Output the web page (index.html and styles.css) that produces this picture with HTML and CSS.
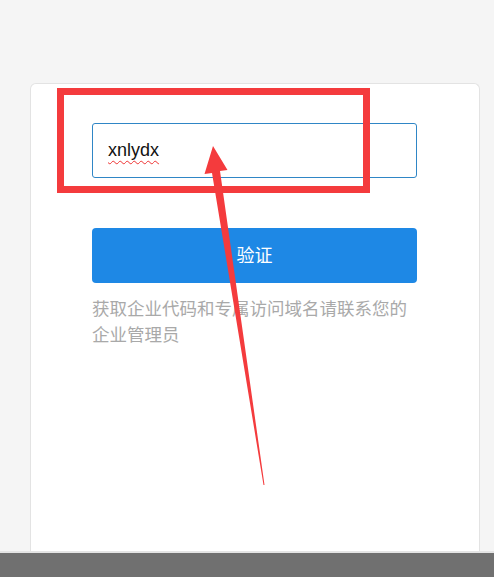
FILE: index.html
```html
<!DOCTYPE html>
<html lang="zh-CN">
<head>
    <meta charset="UTF-8">
    <meta name="viewport" content="width=device-width, initial-scale=1.0">
    <title>企业验证</title>
    <link rel="stylesheet" href="styles.css">
</head>
<body>
    <div class="page">
        <div class="card">
            <div class="input-box"><span class="typed">xnlydx</span></div>
            <button class="verify-btn">验证</button>
            <p class="hint">获取企业代码和专属访问域名请联系您的企业管理员</p>
        </div>
    </div>
    <div class="bottom-bar"></div>

    <!-- annotation drawn over the screenshot -->
    <svg class="markup" width="494" height="577" viewBox="0 0 494 577">
        <rect x="60.5" y="91.5" width="306" height="98" fill="none" stroke="#f43b3d" stroke-width="7"/>
        <polygon fill="#f43b3d" points="213,146 227.5,170 220,171 264.5,485 263.5,485 212,173 204.5,174"/>
    </svg>
</body>
</html>
```

FILE: styles.css
```css
* {
    box-sizing: border-box;
    margin: 0;
    padding: 0;
}

body {
    background-color: #f5f5f5;
    font-family: "Liberation Sans", "Noto Sans CJK SC", sans-serif;
    height: 577px;
    overflow: hidden;
    position: relative;
}

.page {
    padding: 83px 0 0 30px;
}

.card {
    width: 450px;
    height: 468px;
    background-color: #fff;
    border: 1px solid #e3e3e3;
    border-bottom: none;
    border-radius: 6px 6px 0 0;
    padding: 39px 62px 0 61px;
}

.input-box {
    width: 325px;
    height: 55px;
    border: 1px solid #2f86c6;
    border-radius: 3px;
    padding: 0 15px;
    display: flex;
    align-items: center;
    font-size: 18px;
    color: #111;
}

.typed {
    text-decoration: underline wavy #e33;
    text-decoration-thickness: 1px;
    text-underline-offset: 4px;
}

.verify-btn {
    display: block;
    width: 325px;
    height: 55px;
    margin-top: 50px;
    padding-bottom: 3px;
    border: none;
    border-radius: 4px;
    background-color: #1e88e5;
    color: #fff;
    font-family: "Noto Sans CJK SC", sans-serif;
    font-size: 18px;
}

.hint {
    margin-top: 12px;
    width: 325px;
    font-family: "Noto Sans CJK SC", sans-serif;
    font-size: 17.5px;
    line-height: 26px;
    color: #a9a9a9;
}

.bottom-bar {
    height: 26px;
    background-color: #707070;
    border-top: 2px solid #e4e4e4;
}

.markup {
    position: absolute;
    top: 0;
    left: 0;
    pointer-events: none;
}
```
